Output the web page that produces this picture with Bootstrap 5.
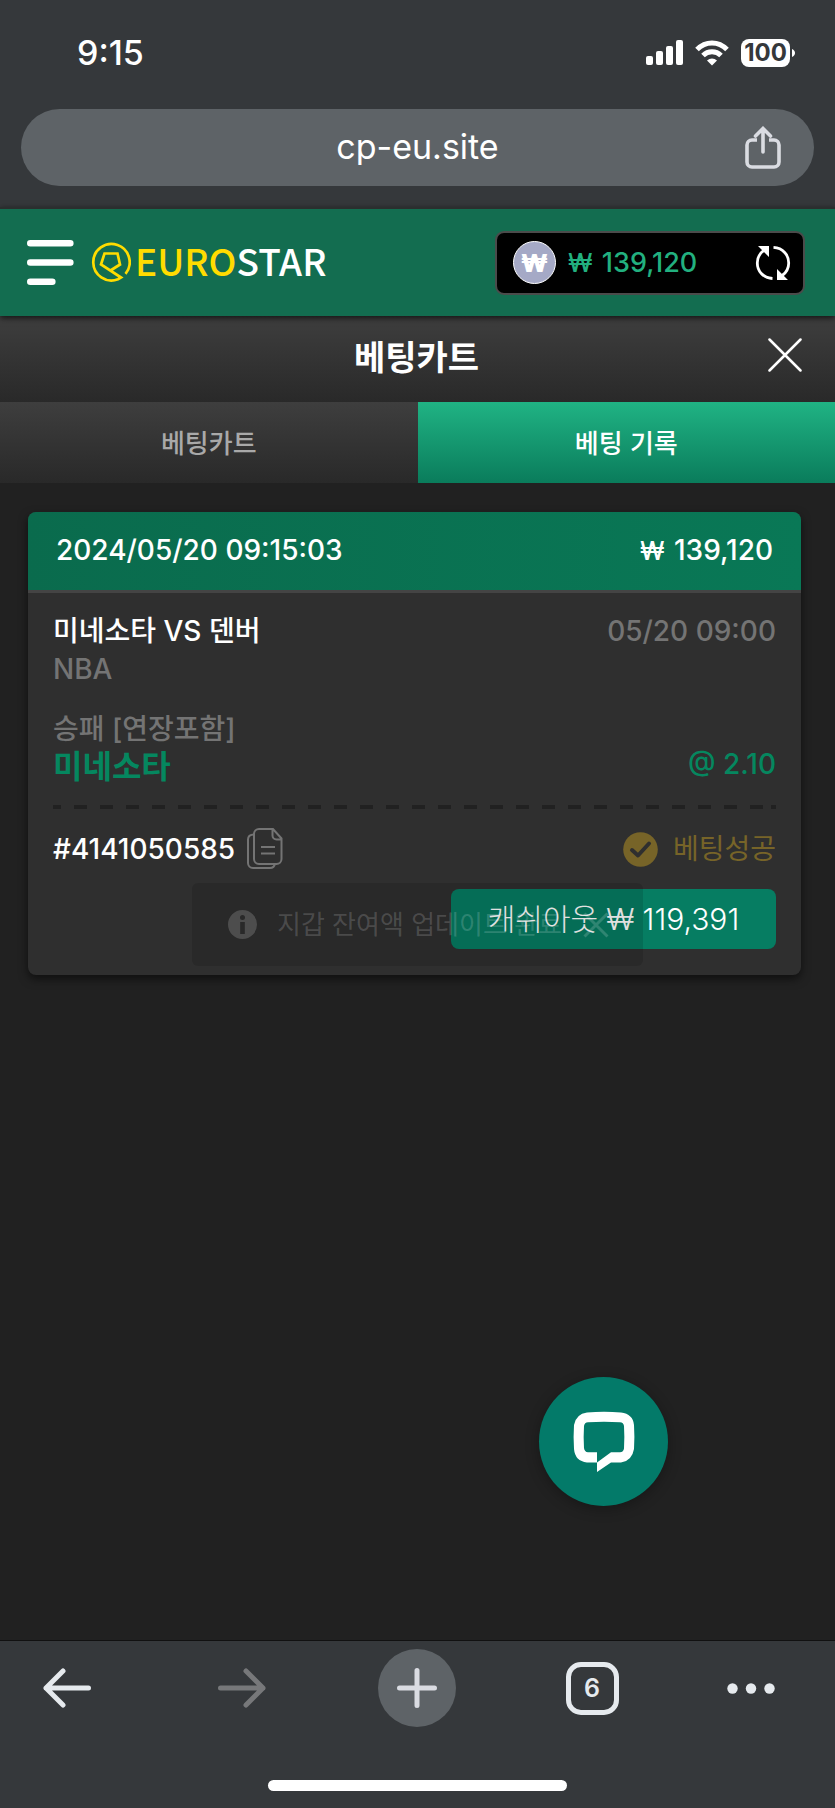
<!DOCTYPE html>
<html lang="ko">
<head>
<meta charset="utf-8">
<meta name="viewport" content="width=device-width, initial-scale=1">
<title>EUROSTAR - 베팅카트</title>
<link href="https://cdn.jsdelivr.net/npm/bootstrap@5.3.0/dist/css/bootstrap.min.css" rel="stylesheet">
<style>
  body { background: #212121; color: #fff; font-family: Inter, "Noto Sans CJK KR", sans-serif; font-size: 28px; line-height: 36px; }
  svg { display: block; flex-shrink: 0; }
  .kr { font-family: "Noto Sans CJK KR", sans-serif; }
  .plain { background: none; border: 0; padding: 0; color: inherit; }
  .krw { font-size: 25px; margin-right: 2px; }

  /* browser chrome */
  .chrome { background: #35383b; }
  .status-bar { height: 109px; padding: 0 40px 4px 77px; }
  .clock { font-size: 34px; }
  .battery { background: #fff; color: #35383b; border-radius: 8px; width: 49px; height: 28px; font-size: 24px; line-height: 28px; }
  .address { background: #5e6367; border-radius: 39px; height: 77px; margin: 0 21px 21px; padding: 0 33px; }
  .address input { font-size: 34px; background: none; border: 0; color: #fff; outline: 0; padding: 0 0 2px 36px; min-width: 0; }

  /* site header */
  .site-header { background: #136d50; height: 109px; border-top: 2px solid #2a2f2e; padding: 0 30px 0 27px; box-shadow: 0 2px 6px rgba(0,0,0,.7); z-index: 2; }
  .brand { color: #fff; font-size: 37px; font-weight: 500; gap: 4px; }
  .brand span { padding-bottom: 6px; }
  .brand b { color: #ffdc00; font-weight: 500; }
  .wallet { width: 310px; height: 64px; background: #000; border: 2px solid #4b4b4b; border-radius: 9px; padding: 0 12px 0 16px; color: #22b07f; font-size: 27px; }
  .coin { width: 43px; height: 43px; border-radius: 50%; background: #a5a9c6; border: 1px solid #fff; color: #fff; font-size: 25px; font-weight: 900; }

  .title-bar { background: linear-gradient(#3e3e3e, #292929); height: 86px; padding: 0 33px 6px; }
  .title-bar h1 { font-size: 34px; line-height: 40px; font-weight: 700; }
  .tabs button { background: linear-gradient(#3e3e3e, #292929); color: #a9a9a9; height: 81px; font-size: 26px; font-weight: 500; padding-bottom: 3px; }
  .tabs button.active { background: linear-gradient(#20b384, #0a7c5b); color: #fff; }

  /* bet slip */
  .slips { padding: 29px 34px 0 28px; }
  .slip { background: #2f2f2f; border-radius: 8px; box-shadow: 0 4px 10px rgba(0,0,0,.55); }
  .slip-head { background: linear-gradient(90deg, #0a6b4d, #097856); height: 81px; border-bottom: 3px solid #444; border-radius: 8px 8px 0 0; padding: 0 28px 2px 28px; font-weight: 500; }
  .slip-body { padding: 20px 25px 26px; }
  .dim { color: #747474; font-weight: 500; }
  .match { height: 38px; }
  .market { margin-top: 25px; line-height: 34px; }
  .pick { color: #05875f; font-weight: 700; }
  .pick .kr { font-size: 32px; }
  .dashes { height: 4px; margin: 23px 0 19px; background: repeating-linear-gradient(90deg, #212121 0 13px, transparent 13px 26px) -5px 0; }
  .slip-id { gap: 12px; }
  .won { color: #776428; gap: 15px; }
  .cashout { background: #067d62; color: #fff; border: 0; border-radius: 8px; width: 325px; height: 60px; margin-top: 19px; font-size: 30px; font-weight: 300; }
  .notice { left: 0; right: 0; top: 400px; width: 451px; height: 83px; margin: 0 auto; border-radius: 6px; background: rgba(0,0,0,.12); color: rgba(255,255,255,.17); padding: 0 34px 0 36px; font-size: 26px; }
  .chat { right: 20%; bottom: 134px; width: 129px; height: 129px; border-radius: 50%; background: #037a69; box-shadow: 0 3px 14px rgba(0,0,0,.3); }

  /* toolbar */
  .toolbar { border-top: 1px solid #111; padding-top: 8px; padding-bottom: 17px; color: #e6eaee; }
  .tools { display: grid; grid-template-columns: 134fr 216fr 134fr 216fr 102fr 33fr; place-items: center; height: 78px; }
  .new-tab { width: 78px; height: 78px; border-radius: 50%; background: #5e6367; color: #dadce2; }
  .tab-count { width: 53px; height: 53px; border: 5px solid #e6eaee; border-radius: 15px; font-size: 25px; font-weight: 600; line-height: 43px; }
  .home-bar { width: 299px; height: 11px; border-radius: 6px; background: #fff; margin: 53px auto 0; }
</style>
</head>
<body>
<div class="d-flex flex-column min-vh-100">
  <div class="chrome">
    <div class="status-bar d-flex align-items-end justify-content-between">
      <div class="clock fw-medium align-self-center">9:15</div>
      <div class="d-flex align-items-center align-self-center">
        <svg width="37" height="25" viewBox="0 0 37 25" fill="#fff"><rect y="16" width="7" height="9" rx="2"/><rect x="10" y="11" width="7" height="14" rx="2"/><rect x="20" y="6" width="7" height="19" rx="2"/><rect x="30" width="7" height="25" rx="2"/></svg>
        <svg class="ms-2 me-2" width="42" height="26" viewBox="-4 0 42 26" fill="none" stroke="#fff" stroke-width="5"><path d="M2 9.5C10.500 .7 23.500 .7 32 9.500M8 15.500C13 10.500 21 10.500 26 15.500"/><path d="M12 20.500c3-2.800 7-2.800 10 0l-5 5z" fill="#fff" stroke="none"/></svg>
        <span class="battery text-center fw-bold">100</span>
        <svg width="5" height="10" viewBox="0 0 5 10" fill="#fff"><path d="M2 1c4 1.500 4 6.500 0 8z"/></svg>
      </div>
    </div>
    <div class="address d-flex align-items-center">
      <input class="flex-grow-1 text-center" type="text" value="cp-eu.site" aria-label="주소">
      <button class="plain" type="button" aria-label="공유"><svg width="36" height="43" viewBox="0 0 36 43" fill="none" stroke="#dadce2" stroke-width="3.600"><path d="M12 14H7a5 5 0 0 0-5 5v17a5 5 0 0 0 5 5h22a5 5 0 0 0 5-5V19a5 5 0 0 0-5-5h-5"/><path d="M18 26V3M10.500 10 18 2.500 25.500 10" stroke-linecap="round"/></svg></button>
    </div>
  </div>

  <header class="site-header d-flex align-items-center justify-content-between position-relative">
    <div class="d-flex align-items-center">
      <button class="plain" type="button" aria-label="메뉴"><svg width="47" height="45" viewBox="0 0 47 45" stroke="#fff" stroke-width="6.600" stroke-linecap="round"><path d="M3.300 3.300h40M3.300 22.500h40M3.300 41.700h22"/></svg></button>
      <a href="#" class="brand kr d-flex align-items-center text-decoration-none ms-3">
        <svg width="41" height="41" viewBox="0 0 41 41" fill="none" stroke="#ffdc00" stroke-width="2.700"><path d="M35.500 31.800A18.200 18.200 0 1 0 28 37.200L31 35.500 11 22.500 14.500 11.500H27.500L30 22.500 20.500 28.500"/></svg>
        <span><b>EURO</b>STAR</span>
      </a>
    </div>
    <div class="wallet d-flex align-items-center">
      <span class="coin d-flex align-items-center justify-content-center">₩</span>
      <span class="flex-grow-1 fw-medium ps-2 ms-1"><span class="krw">₩</span> 139,120</span>
      <button class="plain" type="button" aria-label="새로고침"><svg width="36" height="36" viewBox="0 0 36 36" fill="none" stroke="#fff" stroke-width="2.800"><path d="M17.500 33.500C8 33 2.300 26 2.300 18c0-5 2.300-9.500 6.500-12.500M18.500 2.400C28 3 33.700 10 33.700 18c0 5-2.300 9.500-6.500 12.500"/><path d="M3 1h11v11zM33 35H22V24z" fill="#fff" stroke="none"/></svg></button>
    </div>
  </header>

  <div class="title-bar d-flex align-items-center">
    <h1 class="kr flex-grow-1 text-center m-0 ps-4 ms-2">베팅카트</h1>
    <button class="plain" type="button" aria-label="닫기"><svg width="34" height="36" viewBox="0 0 34 36" stroke="#fff" stroke-width="2.500" stroke-linecap="round"><path d="M1.500 1.500l31 31M32.500 1.500l-31 31"/></svg></button>
  </div>
  <div class="tabs d-flex kr" role="tablist">
    <button class="border-0 w-50" type="button" role="tab">베팅카트</button>
    <button class="border-0 w-50 active" type="button" role="tab" aria-selected="true">베팅 기록</button>
  </div>

  <main class="slips flex-grow-1 position-relative">
    <article class="slip">
      <div class="slip-head d-flex align-items-center justify-content-between"><span>2024/05/20 09:15:03</span><span><span class="krw">₩</span> 139,120</span></div>
      <div class="slip-body">
        <div class="match d-flex justify-content-between"><span class="fw-medium">미네소타 VS 덴버</span><span class="dim">05/20 09:00</span></div>
        <div class="dim">NBA</div>
        <div class="market dim">승패 [연장포함]</div>
        <div class="pick d-flex align-items-center justify-content-between"><span class="kr">미네소타</span><span class="fw-medium">@ 2.10</span></div>
        <div class="dashes"></div>
        <div class="d-flex align-items-center justify-content-between">
          <div class="slip-id d-flex align-items-center fw-medium">#4141050585
            <button class="plain" type="button" aria-label="복사"><svg width="36" height="42" viewBox="0 0 36 42" fill="none" stroke="#747474" stroke-width="2"><path d="M7 6.500C3.500 6.500 1 8 1 11.500V35a5 5 0 0 0 5 5h17c3 0 4.500-1.500 5-4.500"/><path d="M12 1h14l8.500 9.500V31a5 5 0 0 1-5 5H12a5 5 0 0 1-5-5V6a5 5 0 0 1 5-5zM25.500 1v6.500a4 4 0 0 0 4 4h5M14 19h14M14 25.500h14"/></svg></button>
          </div>
          <div class="won d-flex align-items-center">
            <svg width="35" height="35" viewBox="0 0 35 35"><circle cx="17.500" cy="17.500" r="17.300" fill="#776428"/><path d="M9 18l6 5.500L26 11.500" fill="none" stroke="#2f2f2f" stroke-width="4" stroke-linecap="round" stroke-linejoin="round"/></svg>
            <span>베팅성공</span>
          </div>
        </div>
        <div class="d-flex justify-content-end"><button class="cashout" type="button">캐쉬아웃 ₩ 119,391</button></div>
      </div>
    </article>

    <div class="notice kr position-absolute d-flex align-items-center" role="status">
      <svg width="29" height="29" viewBox="0 0 29 29"><path fill="currentColor" fill-rule="evenodd" d="M14.500 0a14.500 14.500 0 1 0 0 29 14.500 14.500 0 0 0 0-29zM14.500 5a2.500 2.500 0 1 1 0 5 2.500 2.500 0 0 1 0-5zM12.200 12h4.600v12h-4.600z"/></svg>
      <span class="flex-grow-1 text-nowrap ms-3 ps-1 pb-1">지갑 잔여액 업데이트 완료</span>
      <svg width="26" height="26" viewBox="0 0 26 26" stroke="currentColor" stroke-width="3"><path d="M1.500 1.500l23 23M24.500 1.500l-23 23"/></svg>
    </div>

    <button class="chat plain position-absolute d-flex align-items-center justify-content-center" type="button" aria-label="채팅">
      <svg width="62" height="62" viewBox="0 0 62 62"><path fill="#fff" fill-rule="evenodd" d="M14 1.500Q31 .2 48 1.500Q60 3 61 14Q61.800 26 61 38Q59 50 48 51.500H38L24 61V51.500H14Q2 50 1 38Q.2 26 1 14Q3 3 14 1.500zM15 11.200Q11.500 11.500 11 15Q10.300 26 11 37Q11.500 41 15 41.300H24V51.500L38 41.300H47Q50.500 41 51 37.500Q51.700 26 51 15Q50.500 11.500 47 11.200Q31 10.300 15 11.200z"/></svg>
    </button>
  </main>

  <footer class="chrome toolbar">
    <div class="tools">
      <button class="plain" type="button" aria-label="뒤로"><svg width="48" height="40" viewBox="0 0 48 40" fill="none" stroke="currentColor" stroke-width="5" stroke-linecap="round" stroke-linejoin="round"><path d="M45.500 20H3M20 3 3 20l17 17"/></svg></button>
      <button class="plain" type="button" aria-label="앞으로"><svg width="48" height="40" viewBox="0 0 48 40" fill="none" stroke="#77787a" stroke-width="5" stroke-linecap="round" stroke-linejoin="round"><path d="M2.500 20H45M28 3l17 17-17 17"/></svg></button>
      <button class="plain new-tab d-flex align-items-center justify-content-center" type="button" aria-label="새 탭"><svg width="40" height="40" viewBox="0 0 40 40" stroke="currentColor" stroke-width="5" stroke-linecap="round"><path d="M20 2.500v35M2.500 20h35"/></svg></button>
      <button class="plain tab-count" type="button">6</button>
      <button class="plain" type="button" aria-label="더보기"><svg width="48" height="11" viewBox="0 0 48 11" fill="currentColor"><circle cx="5.500" cy="5.500" r="5.200"/><circle cx="24" cy="5.500" r="5.200"/><circle cx="42.500" cy="5.500" r="5.200"/></svg></button>
    </div>
    <div class="home-bar"></div>
  </footer>
</div>
<script src="https://cdn.jsdelivr.net/npm/bootstrap@5.3.0/dist/js/bootstrap.bundle.min.js"></script>
</body>
</html>
